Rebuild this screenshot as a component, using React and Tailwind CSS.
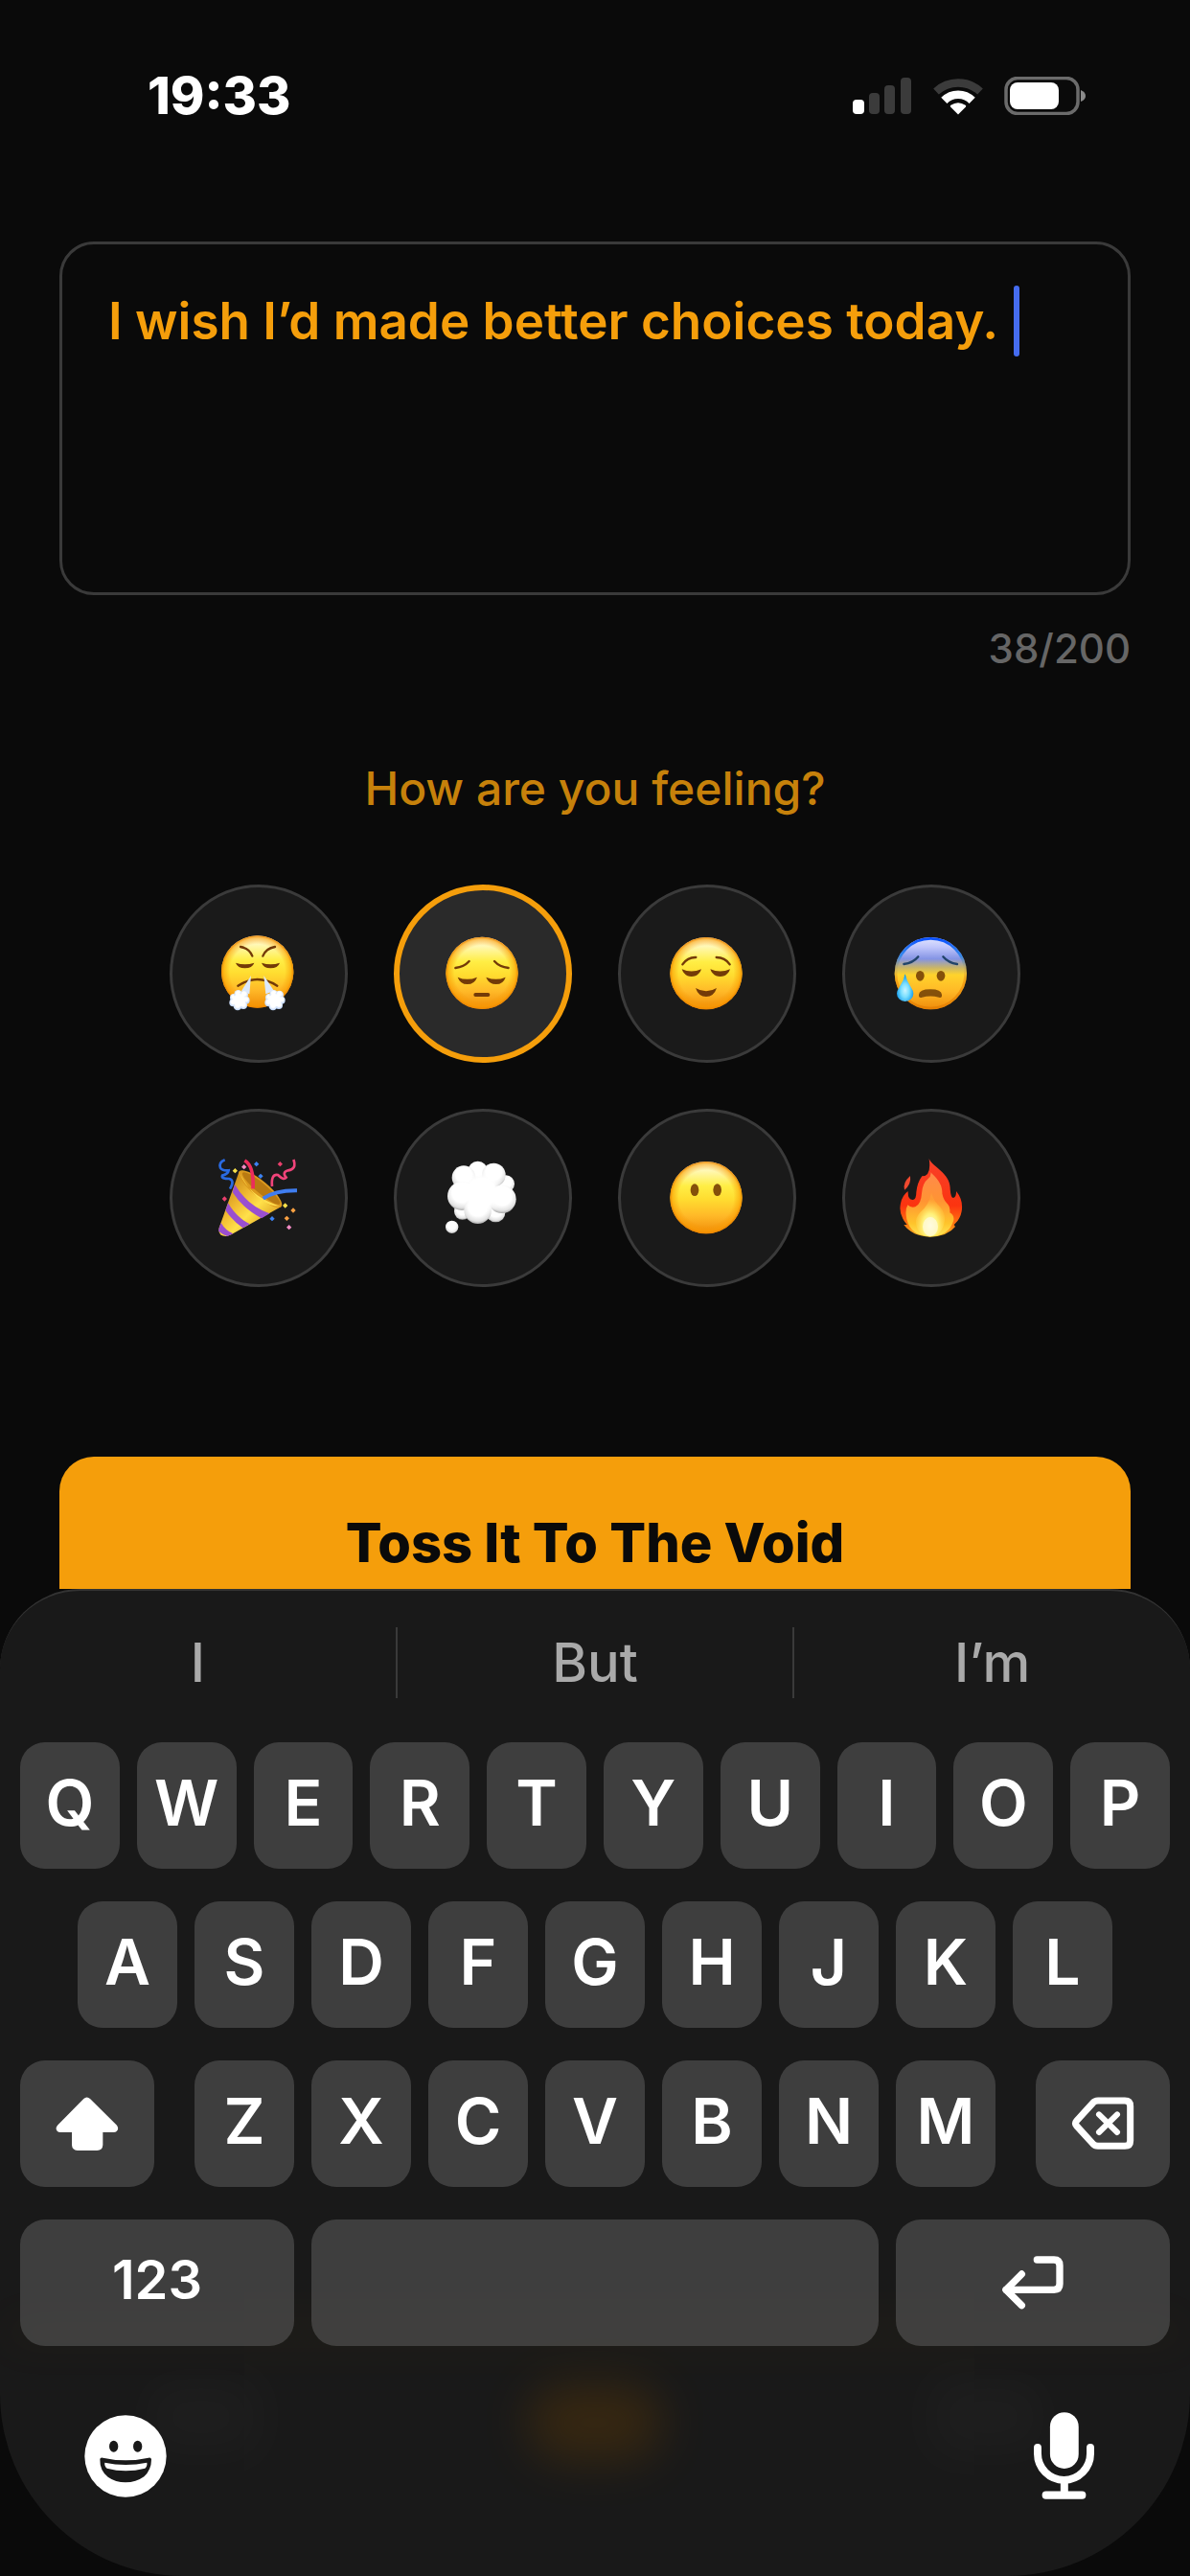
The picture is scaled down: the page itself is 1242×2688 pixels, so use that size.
import { useState } from 'react';

const MAX_LENGTH = 200;

const topRow = ['Q', 'W', 'E', 'R', 'T', 'Y', 'U', 'I', 'O', 'P'];
const middleRow = ['A', 'S', 'D', 'F', 'G', 'H', 'J', 'K', 'L'];
const bottomRow = ['Z', 'X', 'C', 'V', 'B', 'N', 'M'];
const suggestions = ['I', 'But', 'I’m'];

const moods = [
  { id: 'frustrated', label: 'Frustrated', Icon: FrustratedFace },
  { id: 'sad', label: 'Sad', Icon: SadFace },
  { id: 'relieved', label: 'Relieved', Icon: RelievedFace },
  { id: 'anxious', label: 'Anxious', Icon: AnxiousFace },
  { id: 'celebrating', label: 'Celebrating', Icon: PartyPopper },
  { id: 'thoughtful', label: 'Thoughtful', Icon: ThoughtCloud },
  { id: 'speechless', label: 'Speechless', Icon: SpeechlessFace },
  { id: 'fired-up', label: 'Fired up', Icon: Flame },
];

/* Gradients shared by all mood drawings */
function MoodDefs() {
  return (
    <svg className="absolute h-0 w-0" aria-hidden="true">
      <defs>
        <linearGradient id="face" x1="0" y1="0" x2="0" y2="1">
          <stop offset="0" stopColor="#fffbe0" />
          <stop offset="0.12" stopColor="#fff8b8" />
          <stop offset="0.34" stopColor="#ffee45" />
          <stop offset="0.52" stopColor="#ffdd30" />
          <stop offset="0.75" stopColor="#ffb928" />
          <stop offset="1" stopColor="#f08c08" />
        </linearGradient>
        <linearGradient id="face-blue" x1="0" y1="0" x2="0" y2="1">
          <stop offset="0" stopColor="#e3e6ff" />
          <stop offset="0.14" stopColor="#bfc5fb" />
          <stop offset="0.3" stopColor="#8494e4" />
          <stop offset="0.42" stopColor="#c8b56a" />
          <stop offset="0.52" stopColor="#ffd32c" />
          <stop offset="0.75" stopColor="#ffb826" />
          <stop offset="1" stopColor="#ee8b0a" />
        </linearGradient>
        <radialGradient id="rim" cx="0.5" cy="0.5" r="0.5">
          <stop offset="0.76" stopColor="#f79400" stopOpacity="0" />
          <stop offset="0.93" stopColor="#f99a00" stopOpacity="0.55" />
          <stop offset="1" stopColor="#e98200" stopOpacity="0.95" />
        </radialGradient>
        <linearGradient id="rim-blue" x1="0" y1="0" x2="0" y2="1">
          <stop offset="0" stopColor="#0a50ff" />
          <stop offset="0.25" stopColor="#2b86e8" stopOpacity="0.9" />
          <stop offset="0.45" stopColor="#c9a24a" stopOpacity="0.3" />
          <stop offset="0.6" stopColor="#ee8b0a" stopOpacity="0.6" />
          <stop offset="1" stopColor="#e07a00" stopOpacity="0.7" />
        </linearGradient>
        <radialGradient id="tear" cx="0.5" cy="0.6" r="0.55">
          <stop offset="0" stopColor="#c9f4ff" />
          <stop offset="0.45" stopColor="#7adfff" />
          <stop offset="1" stopColor="#0b95ea" />
        </radialGradient>
        <radialGradient id="steam" cx="0.5" cy="0.4" r="0.6">
          <stop offset="0.4" stopColor="#ffffff" />
          <stop offset="1" stopColor="#b9d2fa" />
        </radialGradient>
        <radialGradient id="puff" cx="0.5" cy="0.38" r="0.62">
          <stop offset="0.55" stopColor="#ffffff" />
          <stop offset="0.85" stopColor="#e2e2e2" />
          <stop offset="1" stopColor="#a8a8a8" />
        </radialGradient>
        <radialGradient id="puff-core">
          <stop offset="0.6" stopColor="#ffffff" />
          <stop offset="1" stopColor="#ffffff" stopOpacity="0" />
        </radialGradient>
        <linearGradient id="cone" x1="0" y1="0.3" x2="0.7" y2="1">
          <stop offset="0" stopColor="#c98a17" />
          <stop offset="0.35" stopColor="#f0b931" />
          <stop offset="0.6" stopColor="#ffe14a" />
          <stop offset="1" stopColor="#d9961b" />
        </linearGradient>
        <linearGradient id="fire-outer" x1="0" y1="0" x2="0" y2="1">
          <stop offset="0" stopColor="#f8402a" />
          <stop offset="0.6" stopColor="#fb3410" />
          <stop offset="0.85" stopColor="#ff7a10" />
          <stop offset="1" stopColor="#ffc72c" />
        </linearGradient>
        <linearGradient id="fire-mid" x1="0" y1="0" x2="0" y2="1">
          <stop offset="0" stopColor="#ff8a4a" />
          <stop offset="0.45" stopColor="#ff9433" />
          <stop offset="0.8" stopColor="#ffc52b" />
          <stop offset="1" stopColor="#ffe65a" />
        </linearGradient>
        <radialGradient id="fire-core" cx="0.5" cy="0.75" r="0.6">
          <stop offset="0" stopColor="#fffce0" />
          <stop offset="0.45" stopColor="#fff17a" />
          <stop offset="1" stopColor="#ffc93a" stopOpacity="0.2" />
        </radialGradient>
      </defs>
    </svg>
  );
}

function MoodSvg({ children }) {
  return (
    <svg viewBox="0 0 252 252" className="size-[84px] overflow-visible" aria-hidden="true">
      {children}
    </svg>
  );
}

function Face({ cx = 123, cy = 125 }) {
  return (
    <>
      <circle cx={cx} cy={cy} r="113" fill="url(#face)" />
      <circle cx={cx} cy={cy} r="113" fill="url(#rim)" />
    </>
  );
}

function SteamPuff() {
  return (
    <g fill="url(#steam)">
      <circle cx="14" cy="24" r="12" />
      <circle cx="28" cy="13" r="13" />
      <circle cx="46" cy="15" r="13" />
      <circle cx="52" cy="32" r="12" />
      <circle cx="12" cy="40" r="12" />
      <circle cx="44" cy="48" r="12" />
      <circle cx="26" cy="51" r="13" />
      <circle cx="31" cy="32" r="20" fill="#ffffff" />
    </g>
  );
}

function FrustratedFace() {
  return (
    <MoodSvg>
      <Face cx={122} cy={120} />
      <g fill="none" stroke="#733a08" strokeWidth="7" strokeLinecap="round">
        <path d="M69 42Q97 47 106 71" />
        <path d="M177 42Q148 47 139 71" />
        <path d="M61 164Q92 144 122 144Q153 144 184 164" />
      </g>
      <g fill="#733a08">
        <path d="M54 92Q83 102 112 92Q106 109 83 109Q60 109 54 92Z" />
        <path d="M135 92Q164 102 192 92Q186 109 163 109Q141 109 135 92Z" />
      </g>
      <path d="M102 132L97 190L72 180Z" fill="#dce9fd" />
      <path d="M142 132L148 190L174 180Z" fill="#dce9fd" />
      <g transform="translate(34 177)"><SteamPuff /></g>
      <g transform="translate(145 177)"><SteamPuff /></g>
    </MoodSvg>
  );
}

function SadFace() {
  return (
    <MoodSvg>
      <Face cy={124} />
      <g fill="none" stroke="#733a08" strokeWidth="7" strokeLinecap="round">
        <path d="M40 108Q67 105 83 87" />
        <path d="M162 87Q178 105 206 108" />
      </g>
      <g fill="#733a08">
        <path d="M47 137Q77 150 108 137Q100 159 77 159Q55 159 47 137Z" />
        <path d="M136 137Q167 150 197 137Q190 159 167 159Q144 159 136 137Z" />
        <rect x="97" y="186" width="51" height="12" rx="6" />
      </g>
    </MoodSvg>
  );
}

function RelievedFace() {
  return (
    <MoodSvg>
      <Face />
      <g fill="none" stroke="#733a08" strokeWidth="7" strokeLinecap="round">
        <path d="M49 97Q65 74 91 75" />
        <path d="M155 75Q182 75 197 97" />
      </g>
      <g fill="#733a08">
        <path d="M47 112Q77 125 108 112Q100 135 77 135Q55 135 47 112Z" />
        <path d="M136 112Q167 125 198 112Q190 135 167 135Q144 135 136 112Z" />
        <path d="M90 171Q123 191 156 171Q147 198 123 198Q99 198 90 171Z" />
      </g>
    </MoodSvg>
  );
}

function AnxiousFace() {
  return (
    <MoodSvg>
      <circle cx="124" cy="125" r="113" fill="url(#face-blue)" />
      <circle cx="124" cy="125" r="109" fill="none" stroke="url(#rim-blue)" strokeWidth="8" />
      <g fill="none" stroke="#22446a" strokeWidth="7" strokeLinecap="round">
        <path d="M40 96Q69 93 85 73" />
        <path d="M163 73Q180 93 207 96" />
      </g>
      <g fill="#85500a">
        <ellipse cx="91" cy="133" rx="13" ry="16" />
        <ellipse cx="156" cy="133" rx="13" ry="16" />
        <path d="M87 192Q88 175 123 175Q158 175 159 192Q160 203 150 200Q123 193 97 200Q86 203 87 192Z" />
      </g>
      <path d="M44 126Q48 148 62 168Q70 180 70 188A26 25 0 0 1 18 188Q18 180 26 168Q40 148 44 126Z" fill="url(#tear)" />
    </MoodSvg>
  );
}

function SpeechlessFace() {
  return (
    <MoodSvg>
      <Face />
      <g fill="#85500a">
        <ellipse cx="87" cy="101" rx="13" ry="19" />
        <ellipse cx="158" cy="101" rx="13" ry="19" />
      </g>
    </MoodSvg>
  );
}

function PartyPopper() {
  return (
    <MoodSvg>
      <path d="M65 43L2 220Q-3 246 24 246Q32 245 40 241L197 153Q110 130 65 43Z" fill="url(#cone)" />
      <g fill="#9a4fd0">
        <path d="M51 84L44 108Q75 158 135 190L160 175Q90 150 51 84Z" />
        <path d="M30 142L22 165Q45 198 76 220L98 208Q55 186 30 142Z" />
        <path d="M8 204L2 220Q-1 228 2 232Q16 243 28 246L46 238Q22 228 8 204Z" />
      </g>
      <ellipse cx="131" cy="98" rx="86" ry="25" transform="rotate(40 131 98)" fill="#dc9a1e" />
      <ellipse cx="134" cy="96" rx="76" ry="16" transform="rotate(40 134 96)" fill="#b97a12" />
      <path d="M67 48Q92 118 192 152Q120 152 67 48Z" fill="#ffdf4d" />
      <g fill="none" strokeLinecap="butt">
        <path d="M20 7Q0 15 6 32Q12 42 32 40Q30 52 12 56Q8 66 34 66Q52 72 36 98" stroke="#2a6ae0" strokeWidth="8" />
        <path d="M82 9Q112 26 108 97" stroke="#ec2c5c" strokeWidth="11" />
        <path d="M235 6Q246 36 218 40Q198 46 212 62Q204 72 186 54Q164 50 168 90" stroke="#f0447a" strokeWidth="8" />
        <path d="M140 128Q178 102 246 103" stroke="#3f7df0" strokeWidth="12" />
      </g>
      <path d="M52 33l8 8-8 8-8-8zM209 142l8 8-8 8-8-8z" fill="#f7e04a" />
      <path d="M80 21l8 8-8 8-8-8zM221 210l8 8-8 8-8-8z" fill="#f28bc4" />
      <path d="M119 12l8 8-8 8-8-8zM132 50l8 8-8 8-8-8zM168 183l8 8-8 8-8-8z" fill="#3c82f2" />
      <path d="M193 12l8 8-8 8-8-8zM19 121l8 8-8 8-8-8z" fill="#ea3f6c" />
      <path d="M234 157l8 8-8 8-8-8zM214 182l8 8-8 8-8-8z" fill="#f8a042" />
    </MoodSvg>
  );
}

function ThoughtCloud() {
  return (
    <MoodSvg>
      <g fill="url(#puff)">
        <circle cx="62" cy="168" r="26" />
        <circle cx="198" cy="82" r="27" />
        <circle cx="166" cy="172" r="30" />
        <circle cx="110" cy="42" r="31" />
        <circle cx="66" cy="62" r="37" />
        <circle cx="160" cy="54" r="37" />
        <circle cx="186" cy="130" r="44" />
        <circle cx="60" cy="120" r="45" />
        <circle cx="110" cy="164" r="43" />
        <circle cx="29" cy="217" r="20" />
      </g>
      <circle cx="122" cy="108" r="74" fill="url(#puff-core)" />
    </MoodSvg>
  );
}

function Flame() {
  return (
    <MoodSvg>
      <path
        d="M119 3C127 28 187 48 185 98Q187 126 195 126Q205 123 204 105Q227 133 221 168Q217 193 197 210L201 216Q177 246 122 248Q67 246 40 210L50 210Q22 178 30 143Q35 118 53 105Q52 133 69 132Q79 130 79 108Q82 78 97 58Q127 58 119 3Z"
        fill="url(#fire-outer)"
      />
      <path d="M60 57Q64 84 42 101Q36 78 60 57Z" fill="#f0492f" />
      <path
        d="M124 46C140 62 162 82 160 112Q164 134 178 146Q186 154 184 172Q198 180 196 196Q182 246 122 247Q62 244 50 196Q42 166 52 148Q62 158 76 154Q94 146 96 112Q98 80 116 66Q126 58 124 46Z"
        fill="url(#fire-mid)"
      />
      <path
        d="M126 110Q134 136 152 152Q170 172 168 196Q162 244 122 247Q84 244 78 206Q76 186 92 170Q120 146 126 110Z"
        fill="url(#fire-core)"
      />
      <ellipse cx="123" cy="216" rx="24" ry="30" fill="#fffbe0" opacity="0.7" />
    </MoodSvg>
  );
}

function StatusBar() {
  return (
    <header className="flex h-[200px] shrink-0 items-center justify-between pr-[108px] pl-[154px]">
      <time className="text-[54px] leading-[60px] font-extrabold text-white">19:33</time>
      <div className="flex items-center gap-[22px]">
        <svg viewBox="0 0 62 38" className="h-[38px] w-[62px]" aria-label="Signal">
          <rect x="0" y="23" width="12" height="15" rx="4" fill="#fff" />
          <rect x="17" y="16" width="11" height="22" rx="4" fill="#3b3b3b" />
          <rect x="33" y="8" width="11" height="30" rx="4" fill="#3b3b3b" />
          <rect x="50" y="0" width="11" height="38" rx="4" fill="#3b3b3b" />
        </svg>
        <svg viewBox="0 0 156 116" className="h-[39px] w-[52px]" fill="none" aria-label="Wi-Fi">
          <path d="M9 43A102 102 0 0 1 147 43" stroke="#3b3b3b" strokeWidth="25" />
          <path d="M34 71A62 62 0 0 1 122 71" stroke="#fff" strokeWidth="26" />
          <path d="M78 115L54 91Q52 88 55 86Q78 70 101 86Q104 88 102 91Z" fill="#fff" />
        </svg>
        <svg viewBox="0 0 86 40" className="h-10 w-[86px]" aria-label="Battery">
          <rect x="2" y="1.5" width="75" height="37" rx="12" fill="none" stroke="#6b6b6b" strokeWidth="3.5" />
          <rect x="6" y="6" width="51" height="28" rx="8" fill="#fff" />
          <path d="M80 14Q85 16 85 20Q85 24 80 26Z" fill="#8a8a8a" />
        </svg>
      </div>
    </header>
  );
}

function Key({ children, className = '', label }) {
  return (
    <button
      type="button"
      aria-label={label}
      className={`flex h-[132px] min-w-0 items-center justify-center rounded-[26px] bg-[#7f7f7f5f] text-white ${className}`}
    >
      {children}
    </button>
  );
}

function LetterKeys({ letters }) {
  return letters.map((letter) => (
    <Key key={letter} className="flex-1 pb-1.5 text-[66px] font-semibold">
      {letter}
    </Key>
  ));
}

function Keyboard() {
  return (
    <section
      aria-label="Keyboard"
      className="relative isolate shrink-0 overflow-hidden rounded-t-[84px] rounded-b-[190px] border-t-2 border-[#333333] bg-[#191919] px-[21px]"
    >
      {/* Tab bar glowing through the keyboard */}
      <div className="pointer-events-none absolute inset-x-0 bottom-0 -z-10 h-[270px]">
        <div className="absolute inset-x-0 top-0 h-8 bg-[#f59e0b] opacity-3 blur-xl" />
        <div className="absolute top-16 left-[150px] h-20 w-[120px] bg-white opacity-2 blur-xl" />
        <div className="absolute top-[70px] left-1/2 h-20 w-[140px] -translate-x-1/2 rounded-full bg-[#7a4800] opacity-30 blur-xl" />
        <div className="absolute top-16 right-[150px] h-20 w-[120px] bg-white opacity-2 blur-xl" />
      </div>

      {/* Suggestions */}
      <div className="-mx-[21px] flex pt-[38px]">
        {suggestions.map((word, i) => (
          <button
            key={word}
            type="button"
            className={`h-[74px] flex-1 text-[56px] leading-[74px] font-medium text-[#a9a9a9] ${i > 0 ? 'border-l-2 border-[#3a3a3a]' : ''}`}
          >
            {word}
          </button>
        ))}
      </div>

      {/* Keys */}
      <div className="mt-[46px] flex flex-col gap-[34px]">
        <div className="flex gap-[18px]">
          <LetterKeys letters={topRow} />
        </div>
        <div className="flex gap-[18px] px-[60px]">
          <LetterKeys letters={middleRow} />
        </div>
        <div className="flex gap-[42px]">
          <Key label="Shift" className="w-[140px]">
            <svg viewBox="0 0 198 174" className="h-[58px] w-[66px]" fill="currentColor">
              <path d="M88 9Q98 0 108 9L192 92Q200 104 190 112Q188 114 182 114H148V154Q147 171 130 171H68Q52 170 51 154V114H16Q8 114 5 110Q-2 102 6 92Z" />
            </svg>
          </Key>
          <div className="flex flex-1 gap-[18px]">
            <LetterKeys letters={bottomRow} />
          </div>
          <Key label="Delete" className="w-[140px]">
            <svg viewBox="0 0 198 174" className="h-[58px] w-[66px]" fill="none" stroke="currentColor" strokeWidth="21" strokeLinecap="round" strokeLinejoin="round">
              <path d="M84 15H168Q185 15 185 32V140Q185 157 168 157H84Q74 157 68 150L17 94Q10 86 17 78L68 22Q74 15 84 15Z" />
              <path d="M87 58L144 114M144 58L87 114" strokeWidth="18" />
            </svg>
          </Key>
        </div>
        <div className="grid grid-cols-[286fr_592fr_286fr] gap-[18px]">
          <Key className="pb-1.5 text-[56px] font-semibold">123</Key>
          <Key label="Space" />
          <Key label="Return">
            <svg viewBox="0 0 198 174" className="h-[58px] w-[66px]" fill="none" stroke="currentColor" strokeWidth="22" strokeLinecap="round" strokeLinejoin="round">
              <path d="M112 15H165Q183 15 183 33V91Q183 109 165 109H15" />
              <path d="M64 60L15 109L64 158" />
            </svg>
          </Key>
        </div>
      </div>

      {/* Emoji and dictation */}
      <div className="flex items-center justify-between px-[67px] pt-[69px] pb-[80px]">
        <button type="button" aria-label="Emoji" className="text-white">
          <svg viewBox="0 0 258 258" className="size-[86px]">
            <circle cx="129" cy="129" r="128" fill="currentColor" />
            <ellipse cx="92" cy="98" rx="14" ry="18" fill="#191919" />
            <ellipse cx="167" cy="98" rx="14" ry="18" fill="#191919" />
            <path d="M49 138Q50 132 58 134Q129 150 201 134Q209 132 210 139Q210 172 187 193Q162 211 129 211Q98 211 74 194Q48 174 49 138Z" fill="#191919" />
            <path d="M64 149Q129 163 196 149Q198 160 190 167Q129 182 71 167Q62 160 64 149Z" fill="currentColor" />
          </svg>
        </button>
        <button type="button" aria-label="Dictate" className="mr-3 text-white">
          <svg viewBox="0 0 190 273" className="h-[91px] w-[63px]">
            <rect x="51" y="0" width="90" height="177" rx="45" fill="currentColor" />
            <path d="M12 111V130A83 83 0 0 0 178 130V111" fill="none" stroke="currentColor" strokeWidth="24" strokeLinecap="round" />
            <rect x="84" y="210" width="24" height="42" fill="currentColor" />
            <rect x="26" y="248" width="138" height="25" rx="12" fill="currentColor" />
          </svg>
        </button>
      </div>
    </section>
  );
}

export default function App() {
  const [text, setText] = useState('I wish I’d made better choices today. ');
  const [mood, setMood] = useState('sad');

  return (
    <div className="flex h-screen flex-col overflow-hidden bg-[#0a0a0a] font-['Inter',sans-serif]">
      <MoodDefs />
      <StatusBar />

      <main className="min-h-0 flex-1 overflow-hidden px-[62px] pt-[52px]">
        <div className="relative">
          <textarea
            aria-label="Your thought"
            value={text}
            maxLength={MAX_LENGTH}
            onChange={(e) => setText(e.target.value)}
            className="block h-[369px] w-full resize-none rounded-[36px] border-3 border-[#3a3a3a] bg-transparent px-12 py-12 text-[53px] leading-[64px] font-semibold text-[#f59e0b] outline-none"
          />
          <span className="absolute top-[46px] left-[996px] h-[74px] w-1.5 rounded-full bg-[#456cf0]" />
        </div>
        <p className="mt-[30px] text-right text-[42px] leading-[52px] font-medium text-[#666666]">
          {text.length}/{MAX_LENGTH}
        </p>

        <h2 className="mt-[90px] text-center text-[48px] leading-[60px] font-medium text-[#c6810b]">
          How are you feeling?
        </h2>
        <div className="mt-[70px] grid grid-cols-[repeat(4,186px)] justify-center gap-12">
          {moods.map(({ id, label, Icon }) => (
            <button
              key={id}
              type="button"
              aria-label={label}
              aria-pressed={mood === id}
              onClick={() => setMood(id)}
              className={`flex size-[186px] items-center justify-center rounded-full ${
                mood === id ? 'border-6 border-[#f59e0b] bg-[#2a2a2a]' : 'border-3 border-[#3a3a3a] bg-[#1a1a1a]'
              }`}
            >
              <Icon />
            </button>
          ))}
        </div>

        <button
          type="button"
          className="mt-[177px] h-[180px] w-full rounded-[36px] bg-[#f59e0b] text-[56px] font-extrabold text-[#0a0a0a]"
        >
          Toss It To The Void
        </button>
      </main>

      <Keyboard />
    </div>
  );
}
